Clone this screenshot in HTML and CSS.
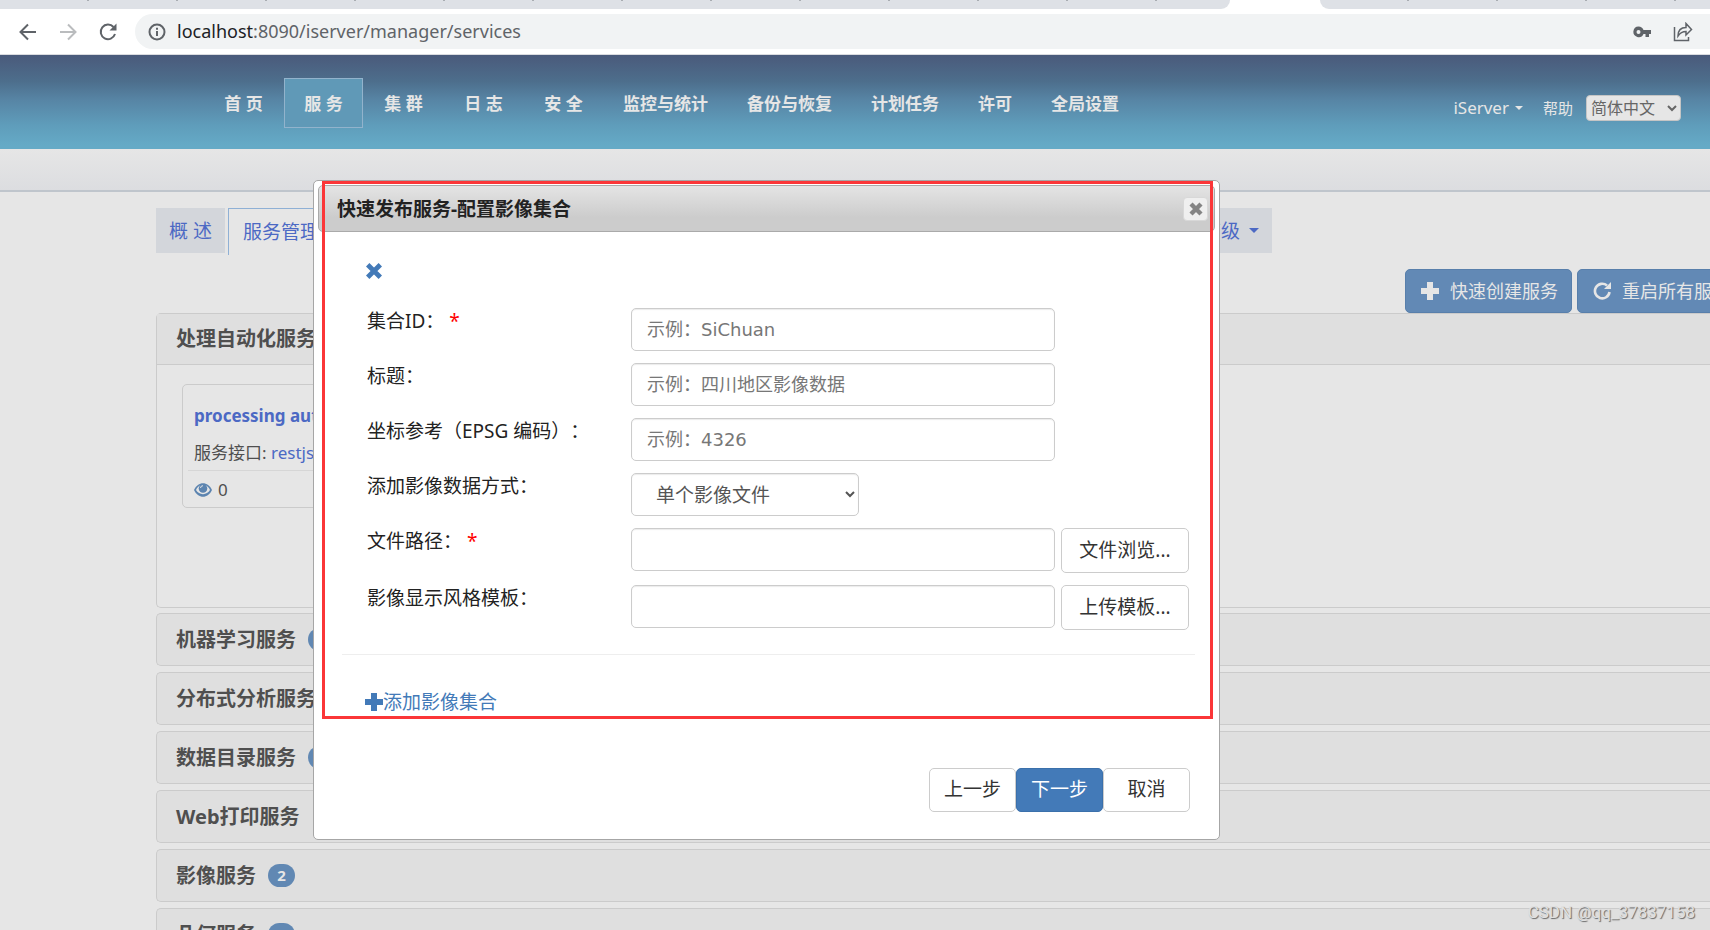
FILE: index.html
```html
<!DOCTYPE html>
<html lang="zh-CN">
<head>
<meta charset="utf-8">
<title>SuperMap iServer</title>
<link rel="stylesheet" href="styles.css">
</head>
<body>
<div class="browser">
  <div class="tabstrip"><span class="tabstrip-left"></span><span class="tabstrip-right"></span></div>
  <div class="toolbar">
    <button class="tool" type="button" aria-label="Back"><svg width="18" height="18" viewBox="0 0 18 18" fill="none" stroke="#5f6368" stroke-width="2"><path d="M17 9H2M9 1.500L1.500 9L9 16.500"/></svg></button>
    <button class="tool" type="button" aria-label="Forward"><svg width="18" height="18" viewBox="0 0 18 18" fill="none" stroke="#babcbe" stroke-width="2"><path d="M1 9H16M9 1.500L16.500 9L9 16.500"/></svg></button>
    <button class="tool" type="button" aria-label="Reload"><svg width="18" height="18" viewBox="0 0 18 18"><path d="M14.500 4A7.300 7.300 0 1 0 16 11" fill="none" stroke="#5f6368" stroke-width="2"/><path d="M17.500 .500V7.500H10.500Z" fill="#5f6368"/></svg></button>
    <div class="address">
      <svg width="18" height="18" viewBox="0 0 18 18" fill="none" stroke="#5f6368" stroke-width="2"><circle cx="9" cy="9" r="7.500"/><path d="M9 8V13M9 4.700V6.700"/></svg>
      <span class="url"><b>localhost</b>:8090/iserver/manager/services</span>
      <svg class="key" width="18" height="12" viewBox="0 0 18 12"><path fill-rule="evenodd" fill="#5f6368" d="M5.500 .500A5.300 5.300 0 0 1 10.500 4H18V8H16V11H12.500V8H10.500A5.300 5.300 0 1 1 5.500 .500ZM5.500 4A2 2 0 1 0 5.500 8A2 2 0 1 0 5.500 4Z"/></svg>
      <svg width="20" height="20" viewBox="0 0 20 20" fill="none" stroke="#5f6368" stroke-width="1.500"><path d="M1.500 5V18.500H15.500V15M5 14C5 8.500 8 5.500 13 5.500V1.500L18.500 7.500L13 13V9.500C9 9.500 7 11 5 14Z"/></svg>
    </div>
  </div>
</div>

<header class="header">
  <nav class="nav">
    <a href="#" class="short">首 页</a><a href="#" class="short current">服 务</a><a href="#" class="short">集 群</a><a href="#" class="short">日 志</a><a href="#" class="short">安 全</a><a href="#">监控与统计</a><a href="#">备份与恢复</a><a href="#">计划任务</a><a href="#">许可</a><a href="#">全局设置</a>
  </nav>
  <div class="user">
    <a href="#" class="account">iServer <i class="caret"></i></a>
    <a href="#" class="help">帮助</a>
    <select class="language" aria-label="语言"><option>简体中文</option></select>
  </div>
</header>
<div class="subbar"></div>

<main class="content">
  <div class="tabs">
    <a href="#" class="tab">概 述</a>
    <a href="#" class="tab tab-active">服务管理</a>
    <a href="#" class="tab">高级 <i class="caret caret-large"></i></a>
  </div>
  <div class="actions">
    <button type="button" class="action"><svg width="18" height="18" viewBox="0 0 18 18"><path fill="#e6e6e6" d="M6 0H12V6H18V12H12V18H6V12H0V6H6Z"/></svg>快速创建服务</button>
    <button type="button" class="action"><svg width="18" height="18" viewBox="0 0 18 18"><path d="M14 3.500A7.300 7.300 0 1 0 16.500 10" fill="none" stroke="#e6e6e6" stroke-width="2.600"/><path d="M18 0V7H11Z" fill="#e6e6e6"/></svg>重启所有服务</button>
  </div>
  <section class="panel panel-open">
    <h3 class="panel-title">处理自动化服务</h3>
    <div class="panel-body">
      <div class="card">
        <a href="#" class="card-title">processing automation</a>
        <p class="card-text">服务接口: <a href="#">restjsr</a></p>
        <div class="views"><svg width="18" height="14" viewBox="0 0 18 14"><path fill="#5c84b0" d="M0 7C4-2 14-2 18 7C14 16 4 16 0 7Z"/><path d="M2 7C3 4.500 5 3 6 2.500A4.500 4.500 0 0 0 12 2.500C13 3 15 4.500 16 7C13 12.500 5 12.500 2 7Z" fill="#e6e6e6"/><circle cx="9" cy="5.500" r="4.300" fill="#5c84b0"/><path d="M6.500 5A2.500 2.500 0 0 1 9 2.700" fill="none" stroke="#e6e6e6"/></svg>0</div>
      </div>
    </div>
  </section>
  <section class="panel"><h3 class="panel-title">机器学习服务 <span class="badge">1</span></h3></section>
  <section class="panel"><h3 class="panel-title">分布式分析服务</h3></section>
  <section class="panel"><h3 class="panel-title">数据目录服务 <span class="badge">1</span></h3></section>
  <section class="panel"><h3 class="panel-title">Web打印服务</h3></section>
  <section class="panel"><h3 class="panel-title">影像服务 <span class="badge">2</span></h3></section>
  <section class="panel"><h3 class="panel-title">几何服务 <span class="badge">1</span></h3></section>
</main>

<div class="dialog" role="dialog" aria-labelledby="dialog-title">
  <div class="dialog-bar">
    <h2 id="dialog-title">快速发布服务-配置影像集合</h2>
    <button type="button" class="close" aria-label="关闭"><svg width="14" height="14" viewBox="0 0 14 14"><path d="M2 2L12 12M12 2L2 12" stroke="#848484" stroke-width="4.400"/></svg></button>
  </div>
  <form class="form">
    <button type="button" class="remove" aria-label="删除"><svg width="16" height="16" viewBox="0 0 16 16"><path d="M1.700 1.700L14.300 14.300M14.300 1.700L1.700 14.300" stroke="#437ab8" stroke-width="4.800"/></svg></button>
    <div class="row"><label for="set-id">集合ID：<em>*</em></label><input id="set-id" type="text" placeholder="示例：SiChuan"></div>
    <div class="row"><label for="set-title">标题：</label><input id="set-title" type="text" placeholder="示例：四川地区影像数据"></div>
    <div class="row"><label for="epsg">坐标参考（EPSG 编码）：</label><input id="epsg" type="text" placeholder="示例：4326"></div>
    <div class="row"><label for="mode">添加影像数据方式：</label><select id="mode"><option>单个影像文件</option></select></div>
    <div class="row"><label for="path">文件路径：<em>*</em></label><input id="path" type="text"><button type="button" class="btn">文件浏览...</button></div>
    <div class="row"><label for="style">影像显示风格模板：</label><input id="style" type="text"><button type="button" class="btn">上传模板...</button></div>
    <hr>
    <a href="#" class="add"><svg width="18" height="18" viewBox="0 0 18 18"><path fill="#437ab8" d="M6 0H12V6H18V12H12V18H6V12H0V6H6Z"/></svg>添加影像集合</a>
    <div class="buttons"><button type="button" class="btn">上一步</button><button type="button" class="btn btn-primary">下一步</button><button type="button" class="btn">取消</button></div>
  </form>
  <div class="highlight"></div>
</div>
<div class="watermark">CSDN @qq_37837158</div>
</body>
</html>
```
FILE: styles.css
```css
* { box-sizing: border-box; }
html { height: 100%; }
body {
  margin: 0;
  height: 100%;
  position: relative;
  overflow: hidden;
  background: #e6e6e6;
  color: #4f4f4f;
  font: 17px/24px "Noto Sans", "Noto Sans CJK SC", sans-serif;
  text-spacing-trim: space-all;
}
a { text-decoration: none; color: #4c69c4; }
button, input, select { font: inherit; margin: 0; }
svg { flex: none; display: block; }
h2, h3, p { margin: 0; }

.tabstrip { height: 9px; display: flex; gap: 90px; background: #fff; }
.tabstrip span { background: repeating-linear-gradient(90deg, transparent 0 87px, #a9adb2 87px 89px) 0 0 / 100% 1px no-repeat #dee1e6; }
.tabstrip-left { flex: 1230; border-bottom-right-radius: 9px; }
.tabstrip-right { flex: 390; border-bottom-left-radius: 9px; }
.toolbar { height: 46px; display: flex; align-items: center; padding-left: 19px; background: #fff; border-bottom: 1px solid #dadce0; }
.tool { border: 0; padding: 0; background: none; margin-right: 22px; }
.tool:nth-child(3) { margin-right: 18px; }
.address { flex: 1; height: 35px; display: flex; align-items: center; gap: 11px; padding: 0 17px 0 13px; border-radius: 18px 0 0 18px; background: #f1f3f4; }
.url { flex: 1; font-size: 18px; line-height: 24px; padding-bottom: 2px; color: #5f6368; }
.url b { font-weight: 400; color: #202124; }
.key { margin-right: 11px; }

.header {
  height: 94px;
  display: flex;
  justify-content: space-between;
  padding: 0 29px 0 204px;
  background: linear-gradient(#4a5a7b, #4d6e8c 28%, #5785a5 48%, #5f9dbb 75%, #65aac6 96%);
}
.nav { display: flex; gap: 1px; padding-top: 23px; }
.nav a { height: 50px; padding: 0 18px; border: 1px solid transparent; line-height: 50px; font-weight: 700; color: #e6e6e6; text-align: center; white-space: nowrap; }
.nav .short { min-width: 79px; }
.nav .current { background: #6099b7; border-color: #92b3cc; }
.user { display: flex; align-items: center; padding-top: 12px; font-size: 16px; white-space: nowrap; }
.user a { color: #e6e6e6; }
.user .account { display: flex; align-items: center; gap: 6px; margin-right: 20px; font-size: 17px; }
.user .help { font-size: 15px; margin-right: 13px; }
.caret { border: 4px solid transparent; border-top-color: currentColor; border-bottom: 0; }
.caret-large { border-width: 5px 5px 0; }
.language { width: 95px; height: 26px; border: 1px solid #c5c5c5; border-radius: 4px; background: #e6e6e6; color: #666; padding: 0; }
.subbar { height: 43px; border-bottom: 2px solid #bfc5cc; background: linear-gradient(#e6e6e6, #dcdde0); }

.content { padding: 16px 0 0 156px; }
.tabs { width: 1116px; height: 47px; display: flex; align-items: flex-start; gap: 3px; font-size: 19px; }
.tab { height: 45px; display: flex; align-items: center; gap: 4px; padding: 0 13px; background: #d3d6db; white-space: pre; }
.tab-active { flex: 1; height: 47px; padding: 0 14px; border: 1px solid #8fb0d5; border-bottom: 0; background: #e6e6e6; }
.actions { display: flex; gap: 5px; justify-content: flex-start; margin: 14px 0 0 1249px; }
.action { flex: none; height: 44px; display: flex; align-items: center; gap: 11px; padding: 0 13px 0 15px; border: 1px solid #587fab; border-radius: 5px; background: #6289b5; color: #e6e6e6; font-size: 18px; white-space: nowrap; }
.panel { height: 53px; margin-bottom: 6px; border: 1px solid #cbcbcb; border-right: 0; border-radius: 5px 0 0 5px; background: #dfdfdf; }
.panel-open { height: 295px; margin-bottom: 5px; background: #e6e6e6; }
.panel-title { height: 51px; display: flex; align-items: center; gap: 12px; padding-left: 19px; font-size: 20px; }
.panel-open .panel-title { background: #dfdfdf; border-bottom: 1px solid #cbcbcb; }
.badge { min-width: 27px; height: 23px; border-radius: 12px; background: #6188b3; color: #e6e6e6; font-size: 15px; line-height: 23px; text-align: center; }
.panel-body { padding: 19px 25px; }
.card { width: 380px; height: 124px; padding: 19px 5px 0; border: 1px solid #cbcbcb; border-radius: 5px; }
.card-title { display: block; padding-left: 6px; font-weight: 700; }
.card-text { padding: 13px 6px 5px; border-bottom: 1px solid #d6d6d6; }
.views { display: flex; align-items: center; gap: 6px; padding: 7px 6px; }

.dialog { position: absolute; left: 313px; top: 180px; width: 907px; height: 660px; padding: 4px; border: 1px solid #a6a6a6; border-radius: 5px; background: #fff; color: #333; font-size: 19px; }
.dialog-bar { height: 47px; display: flex; align-items: center; justify-content: space-between; padding: 0 6px 0 18px; border: 1px solid #aaa; border-radius: 5px; background: linear-gradient(#e4e4e4, #ccc 70%); }
.dialog-bar h2 { font-size: 19px; color: #222; }
.close { width: 25px; height: 24px; padding: 0; display: grid; place-items: center; border: 1px solid #d8d8d8; border-radius: 4px; background: #efefef; }
.form { padding: 31px 20px 0 24px; }
.remove { display: block; margin: 0 0 29px 24px; padding: 0; border: 0; background: none; }
.row { display: flex; align-items: flex-start; margin: 0 6px 12px 25px; }
.row label { width: 264px; color: #222; line-height: 26px; white-space: nowrap; }
.row em { font-style: normal; color: #f00; margin-left: 5px; }
.row input, .row select { height: 43px; border: 1px solid #ccc; border-radius: 5px; background: #fff; box-shadow: inset 0 1px 1px #ececec; color: #555; }
.row input { width: 424px; padding: 0 15px; font: 18px "DejaVu Sans", "Noto Sans CJK SC", sans-serif; }
.row input::placeholder { color: #777; }
.row select { width: 228px; padding: 0 0 0 20px; }
.btn { height: 45px; padding: 0 14px; border: 1px solid #ccc; border-radius: 5px; background: #fff; color: #333; white-space: nowrap; }
.row .btn { flex: 1; margin-left: 6px; padding: 0 0 2px; }
hr { margin: 24px 0 0; border: 0; border-top: 1px solid #eee; }
.add { display: flex; align-items: center; width: max-content; gap: 0; margin: 35px 0 0 23px; color: #437ab8; }
.buttons { display: flex; justify-content: flex-end; margin: 54px 5px 0 0; }
.buttons .btn { min-width: 87px; height: 44px; padding-bottom: 3px; }
.buttons .btn-primary { background: #437ab8; border-color: #3b70ab; color: #fff; }
.highlight { position: absolute; left: 8px; top: 0; width: 891px; height: 538px; border: 3px solid #fb3638; pointer-events: none; }
.watermark { position: absolute; right: 15px; bottom: 5px; font: 17px/26px Roboto, sans-serif; color: #e0e0e0; text-shadow: 1px 1px 1px #666; }
```
